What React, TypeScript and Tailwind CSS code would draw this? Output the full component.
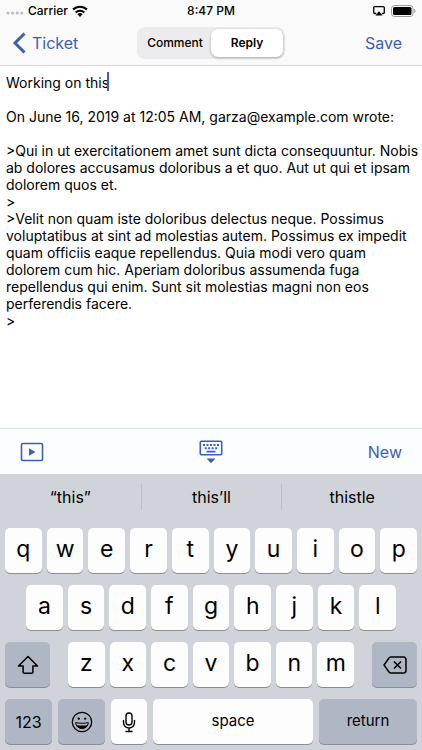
import React, { useState } from 'react';

const MESSAGE = `Working on this

On June 16, 2019 at 12:05 AM, garza@example.com wrote:

>Qui in ut exercitationem amet sunt dicta consequuntur. Nobis ab dolores accusamus doloribus a et quo. Aut ut qui et ipsam dolorem quos et.
>
>Velit non quam iste doloribus delectus neque. Possimus voluptatibus at sint ad molestias autem. Possimus ex impedit quam officiis eaque repellendus. Quia modi vero quam dolorem cum hic. Aperiam doloribus assumenda fuga repellendus qui enim. Sunt sit molestias magni non eos perferendis facere.
>`;

const SUGGESTIONS = ['“this”', 'this’ll', 'thistle'];

interface KeyProps {
  children: React.ReactNode;
  label?: string;
  dark?: boolean;
  className?: string;
}

const Key = ({ children, label, dark, className = 'flex-1 text-[23px] pb-0.5' }: KeyProps) => (
  <button
    type="button"
    aria-label={label}
    className={`flex h-[45px] min-w-0 items-center justify-center rounded-[5px] shadow-[0_1px_0_#8b8d91] ${
      dark ? 'bg-[#b0b7c4]' : 'bg-[#fdfdfe]'
    } ${className}`}
  >
    {children}
  </button>
);

const StatusBar = () => (
  <div className="grid h-[21px] grid-cols-3 items-center px-1.5 text-xs font-medium">
    <div className="flex items-center gap-1">
      <svg width="18" height="12" viewBox="0 0 18 12" fill="#bdbdbd">
        <circle cx="2" cy="8" r="1.6" />
        <circle cx="6.6" cy="8" r="1.6" />
        <circle cx="11.2" cy="8" r="1.6" />
        <circle cx="15.8" cy="8" r="1.6" />
      </svg>
      <span>Carrier</span>
      <svg width="16" height="12" viewBox="0 0 16 12" fill="none" stroke="black" strokeWidth="2.1">
        <path d="M1 4.6a10 10 0 0 1 14 0" />
        <path d="M3.7 7.5a6.1 6.1 0 0 1 8.6 0" />
        <path d="M8 12 5.4 9.3a3.7 3.7 0 0 1 5.2 0Z" fill="black" stroke="none" />
      </svg>
    </div>
    <span className="text-center">8:47 PM</span>
    <div className="flex items-center justify-end gap-1.5">
      <svg width="12" height="10" viewBox="0 0 12 10">
        <path d="M3.2 7.5H1.6a.9.9 0 0 1-.9-.9V1.6c0-.5.4-.9.9-.9h8.8c.5 0 .9.4.9.9v5c0 .5-.4.9-.9.9H8.8" fill="none" stroke="black" strokeWidth="1.3" />
        <path d="M6 5.2 9.6 9.6H2.4Z" />
      </svg>
      <svg width="25" height="12" viewBox="0 0 25 12">
        <rect x=".5" y=".5" width="21.5" height="11" rx="3" fill="none" stroke="#9b9b9b" />
        <rect x="2" y="2" width="18.5" height="8" rx="1.6" />
        <path d="M23.2 4v4c.8-.3 1.3-1.1 1.3-2s-.5-1.7-1.3-2Z" fill="#9b9b9b" />
      </svg>
    </div>
  </div>
);

const NavBar = () => {
  const [mode, setMode] = useState('Reply');

  return (
    <nav className="grid h-11 grid-cols-[1fr_auto_1fr] items-center px-3 text-[#3e5fb8]">
      <a href="#ticket" className="flex items-center gap-1.5 text-base">
        <svg width="14" height="22" viewBox="0 0 14 22" fill="none" stroke="currentColor" strokeWidth="3">
          <path d="M12.5 1.5 3 11l9.5 9.5" />
        </svg>
        Ticket
      </a>
      <div className="flex h-8 rounded-[8px] bg-[#ececee] p-0.5 text-xs font-medium text-black">
        {['Comment', 'Reply'].map(item => (
          <button
            key={item}
            type="button"
            aria-pressed={mode === item}
            onClick={() => setMode(item)}
            className={`w-[72px] rounded-[7px] ${
              mode === item ? 'bg-white font-semibold shadow-[0_1px_3px_rgba(0,0,0,0.3)]' : ''
            }`}
          >
            {item}
          </button>
        ))}
      </div>
      <button type="button" className="mr-2 justify-self-end text-base">Save</button>
    </nav>
  );
};

const Toolbar = () => (
  <div className="grid h-[46px] grid-cols-3 items-center border-t border-[#dcdfe0] bg-[#fbfefe] px-5 text-[#3e5fb8]">
    <button type="button" aria-label="Run macro" className="justify-self-start">
      <svg width="24" height="20" viewBox="0 0 24 20">
        <rect x="1.5" y="1.5" width="21" height="17" rx="1" fill="none" stroke="currentColor" strokeWidth="1.6" />
        <path d="M9 6.2v7.6l6.5-3.8Z" fill="currentColor" />
      </svg>
    </button>
    <button type="button" aria-label="Hide keyboard" className="justify-self-center">
      <svg width="24" height="24" viewBox="0 0 24 24" fill="currentColor">
        <rect x="1.3" y="1.3" width="21.4" height="13.4" rx="1" fill="none" stroke="currentColor" strokeWidth="1.6" />
        <path d="M4 4h2v2H4zM7.5 4h2v2h-2zM11 4h2v2h-2zM14.5 4h2v2h-2zM18 4h2v2h-2zM5.7 7.3h2v2h-2zM9.2 7.3h2v2h-2zM12.7 7.3h2v2h-2zM16.2 7.3h2v2h-2zM7.5 10.8h9v1.7h-9z" />
        <path d="M7.5 18.500h9L12 23.200Z" />
      </svg>
    </button>
    <button type="button" className="justify-self-end text-base">New</button>
  </div>
);

const Keyboard = () => (
  <div className="bg-[#d0d3d9] pb-1.5">
    <div className="grid h-[54px] grid-cols-3 pt-2.5 pb-[18px] text-base">
      {SUGGESTIONS.map((word, i) => (
        <button key={word} type="button" className={i > 0 ? 'border-l border-[#bbbec4]' : ''}>
          {word}
        </button>
      ))}
    </div>
    <div className="flex flex-col gap-3 px-[5px]">
      <div className="flex gap-[5px]">
        {'qwertyuiop'.split('').map(letter => <Key key={letter}>{letter}</Key>)}
      </div>
      <div className="flex gap-[5px] px-[21px]">
        {'asdfghjkl'.split('').map(letter => <Key key={letter}>{letter}</Key>)}
      </div>
      <div className="flex gap-[18px]">
        <Key dark label="Shift" className="w-[45px]">
          <svg width="22" height="20" viewBox="0 0 22 20" fill="none" stroke="black" strokeWidth="1.5" strokeLinejoin="round">
            <path d="M11 1.5 1.5 11h4.6v6.2c0 .6.4 1 1 1h7.8c.6 0 1-.4 1-1V11h4.6Z" />
          </svg>
        </Key>
        <div className="flex flex-1 gap-[5px]">
          {'zxcvbnm'.split('').map(letter => <Key key={letter}>{letter}</Key>)}
        </div>
        <Key dark label="Delete" className="w-[45px]">
          <svg width="24" height="18" viewBox="0 0 24 18" fill="none" stroke="black" strokeWidth="1.5" strokeLinejoin="round">
            <path d="M8 1h12.5A2.5 2.5 0 0 1 23 3.5v11a2.5 2.5 0 0 1-2.5 2.5H8c-.7 0-1.3-.3-1.8-.8L1 9l5.2-7.2C6.7 1.3 7.3 1 8 1Z" />
            <path d="m11 5.5 7 7m0-7-7 7" />
          </svg>
        </Key>
      </div>
      <div className="flex gap-1.5 text-[15px]">
        <Key dark className="w-[47px] text-base">123</Key>
        <Key dark label="Emoji" className="w-[47px]">
          <svg width="22" height="22" viewBox="0 0 22 22" fill="none" stroke="black" strokeWidth="1.3">
            <circle cx="11" cy="11" r="9.7" />
            <circle cx="7.8" cy="7.6" r="1.2" fill="black" stroke="none" />
            <circle cx="14.2" cy="7.6" r="1.2" fill="black" stroke="none" />
            <path d="M4.6 11.6c4 .9 8.8.9 12.8 0-.3 3.5-2.8 5.9-6.4 5.9s-6.1-2.4-6.400-5.900Z" strokeWidth="1" />
            <path d="M5 14c4 .8 8 .8 12 0-1 2.200-3.200 3.500-6 3.500S6 16.200 5 14Z" fill="black" stroke="none" />
          </svg>
        </Key>
        <Key label="Dictate" className="w-9">
          <svg width="14" height="22" viewBox="0 0 14 22" fill="none" stroke="black" strokeWidth="1.4" strokeLinecap="round">
            <rect x="4" y="2" width="6" height="12" rx="3" />
            <path d="M1.5 9.5v2a5.5 5.5 0 0 0 11 0v-2M7 17v3.5M4 20.5h6" />
          </svg>
        </Key>
        <Key className="flex-1">space</Key>
        <Key dark className="w-[98px]">return</Key>
      </div>
    </div>
  </div>
);

export default function App() {
  const [message, setMessage] = useState(MESSAGE);

  return (
    <div className="flex min-h-screen flex-col bg-white font-['Inter','Liberation_Sans',sans-serif] text-black">
      <header className="border-b border-[#d9d9d9] bg-[#fafafa]">
        <StatusBar />
        <NavBar />
      </header>
      <main className="relative flex flex-1">
        <textarea
          aria-label="Reply message"
          value={message}
          onChange={e => setMessage(e.target.value)}
          className="w-full resize-none pt-2 pl-1.5 text-sm leading-[17px] caret-[#3e5fb8] outline-none"
        />
        <span className="absolute top-1.5 left-[107px] h-[19px] w-0.5 bg-[#3e5fb8]" />
      </main>
      <Toolbar />
      <Keyboard />
    </div>
  );
}
